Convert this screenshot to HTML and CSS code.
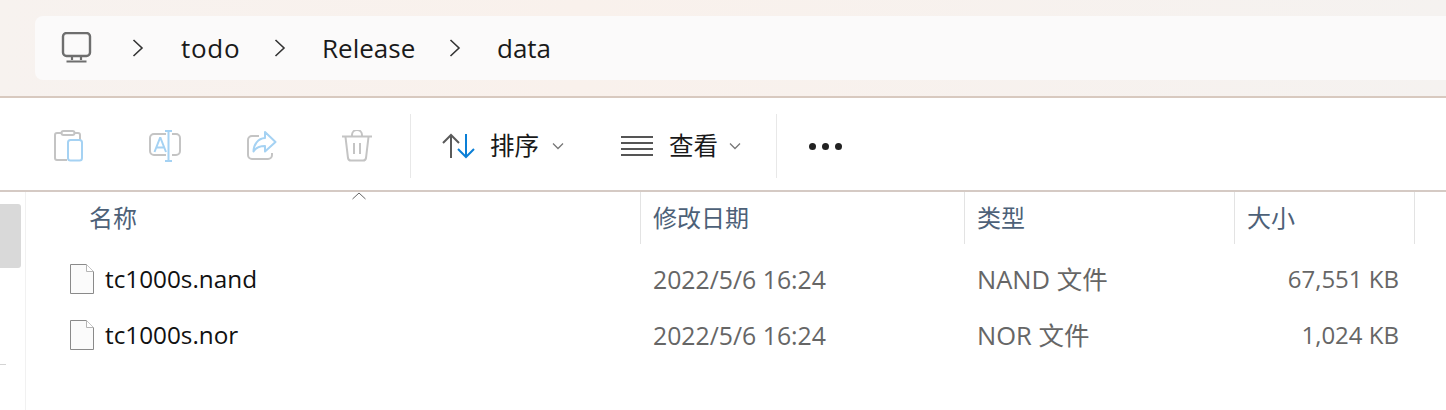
FILE: index.html
```html
<!DOCTYPE html>
<html lang="zh-CN">
<head>
  <meta charset="UTF-8" />
  <title>data</title>
  <link rel="stylesheet" href="styles.css">
</head>
<body>
  <div class="address-area">
    <div class="address-bar">
      <svg class="pc-icon" width="32" height="32" viewBox="0 0 32 32" fill="none">
        <rect x="2" y="1" width="27" height="23" rx="3.5" stroke="#6e6e6e" stroke-width="2.4"/>
        <path d="M11 24v4M20 24v4M5.500 29.500h20" stroke="#6e6e6e" stroke-width="2.200"/>
      </svg>
      <svg class="crumb-arrow" width="12" height="20" viewBox="0 0 12 20" fill="none"><path d="M1.500 2l8.500 8-8.500 8" stroke="#333" stroke-width="1.600"/></svg>
      <span class="crumb crumb-todo">todo</span>
      <svg class="crumb-arrow" width="12" height="20" viewBox="0 0 12 20" fill="none"><path d="M1.500 2l8.500 8-8.500 8" stroke="#333" stroke-width="1.600"/></svg>
      <span class="crumb crumb-release">Release</span>
      <svg class="crumb-arrow" width="12" height="20" viewBox="0 0 12 20" fill="none"><path d="M1.500 2l8.500 8-8.500 8" stroke="#333" stroke-width="1.600"/></svg>
      <span class="crumb">data</span>
    </div>
  </div>

  <div class="toolbar">
    <div class="tool-group">
      <svg width="30" height="32" viewBox="0 0 30 32" fill="none">
        <path d="M13 30H3a2 2 0 0 1-2-2V5a2 2 0 0 1 2-2h4M21 3h3a2 2 0 0 1 2 2v5" stroke="#c4c4c4" stroke-width="2"/>
        <rect x="7.500" y="1" width="13" height="4" rx="2" stroke="#c4c4c4" stroke-width="2"/>
        <rect x="14" y="10" width="14" height="20.500" rx="2.500" stroke="#a5d2f3" stroke-width="2"/>
      </svg>
      <svg width="34" height="32" viewBox="0 0 34 32" fill="none">
        <path d="M18 4H6a4 4 0 0 0-4 4v13a4 4 0 0 0 4 4h12M24 4h4a4 4 0 0 1 4 4v13a4 4 0 0 1-4 4h-4" stroke="#c4c4c4" stroke-width="2"/>
        <path d="M17 1h7M17 31h7M20.500 1v30M6.500 22L12 8h.5L18 22M8.500 17.500h7.500" stroke="#a5d2f3" stroke-width="2"/>
      </svg>
      <svg width="32" height="32" viewBox="0 0 32 32" fill="none">
        <path d="M13 6H6a4 4 0 0 0-4 4v15a4 4 0 0 0 4 4h16a4 4 0 0 0 4-4v-2" stroke="#c4c4c4" stroke-width="2"/>
        <path d="M19 2l10.500 10L19 21.500V16c-5 0-9 1.500-11.500 5.500 0-7 4.500-13 11.500-13.500z" stroke="#a5d2f3" stroke-width="2" stroke-linejoin="round"/>
      </svg>
      <svg width="30" height="32" viewBox="0 0 30 32" fill="none">
        <path d="M0 6.500h30M10 6.500V5a4.500 4.500 0 0 1 10 0v1.500M3.500 7l2.500 21a3 3 0 0 0 3 2.500h12a3 3 0 0 0 3-2.500l2.500-21M12 13v11M18 13v11" stroke="#c4c4c4" stroke-width="2"/>
      </svg>
    </div>
    <div class="tool-divider"></div>
    <div class="tool-btn tool-sort">
      <svg width="36" height="26" viewBox="0 0 36 26" fill="none">
        <path d="M9 25V2M1 10l8-8 8 8" stroke="#5a5a5a" stroke-width="2"/>
        <path d="M24 1v23M16 16l8 8 8-8" stroke="#0b7fd6" stroke-width="2"/>
      </svg>
      <span>排序</span>
      <svg class="caret" width="12" height="8" viewBox="0 0 12 8" fill="none"><path d="M1 1.500l5 5 5-5" stroke="#777" stroke-width="1.300"/></svg>
    </div>
    <div class="tool-btn tool-view">
      <svg width="32" height="22" viewBox="0 0 32 22" fill="none">
        <path d="M0 2h32M0 8h32M0 14h32M0 20h32" stroke="#555" stroke-width="2"/>
      </svg>
      <span>查看</span>
      <svg class="caret" width="12" height="8" viewBox="0 0 12 8" fill="none"><path d="M1 1.500l5 5 5-5" stroke="#777" stroke-width="1.300"/></svg>
    </div>
    <div class="tool-divider divider-last"></div>
    <div class="more-dots"><i></i><i></i><i></i></div>
  </div>

  <div class="content">
    <aside class="side-pane">
      <div class="side-thumb"></div>
      <div class="side-tick"></div>
    </aside>
    <main class="file-list">
      <div class="list-row list-head">
        <div class="col-name">名称
          <svg class="sort-mark" width="14" height="8" viewBox="0 0 14 8" fill="none"><path d="M.5 7l6.500-6 6.500 6" stroke="#666" stroke-width="1"/></svg>
        </div>
        <div class="col-date">修改日期</div>
        <div class="col-type">类型</div>
        <div class="col-size">大小</div>
        <div class="col-end"></div>
      </div>
      <div class="list-row file-row">
        <div class="col-name">
          <svg class="file-icon" width="24" height="30" viewBox="0 0 24 30" fill="none">
            <path d="M.5.500h16l7 7v22H.500z" fill="#fbfbfb" stroke="#8a8a8a"/>
            <path d="M16.500.500v7h7" fill="#fff" stroke="#b5b5b5"/>
          </svg>
          <span class="file-name">tc1000s.nand</span>
        </div>
        <div class="col-date">2022/5/6 16:24</div>
        <div class="col-type">NAND 文件</div>
        <div class="col-size">67,551 KB</div>
      </div>
      <div class="list-row file-row">
        <div class="col-name">
          <svg class="file-icon" width="24" height="30" viewBox="0 0 24 30" fill="none">
            <path d="M.5.500h16l7 7v22H.500z" fill="#fbfbfb" stroke="#8a8a8a"/>
            <path d="M16.500.500v7h7" fill="#fff" stroke="#b5b5b5"/>
          </svg>
          <span class="file-name">tc1000s.nor</span>
        </div>
        <div class="col-date">2022/5/6 16:24</div>
        <div class="col-type">NOR 文件</div>
        <div class="col-size">1,024 KB</div>
      </div>
    </main>
  </div>
</body>
</html>
```

FILE: styles.css
```css
* {
  box-sizing: border-box;
  margin: 0;
  padding: 0;
}

html, body {
  height: 410px;
  overflow: hidden;
}

body {
  font-family: "Open Sans", "Noto Sans CJK SC", sans-serif;
  font-size: 24px;
  background: #fff;
  color: #1a1a1a;
}

svg {
  display: block;
  flex: none;
}

.address-area {
  height: 98px;
  padding: 16px 0 0 35px;
  background: linear-gradient(90deg, #f7f2ef 0%, #f9f1ec 40%, #f5f2f0 100%);
  border-bottom: 2px solid #d8c9bf;
}

.address-bar {
  height: 64px;
  display: flex;
  align-items: center;
  padding-left: 26px;
  background: #fbfafa;
  border-radius: 8px 0 0 8px;
}

.crumb-arrow {
  margin: 0 36px 0 36px;
}

.pc-icon + .crumb-arrow {
  margin-left: 39px;
}

.crumb {
  font-size: 26px;
  line-height: 64px;
}

.crumb-todo {
  width: 57px;
  margin-left: 1px;
  letter-spacing: .7px;
}

.crumb-release {
  width: 91px;
}

.toolbar {
  height: 94px;
  padding-top: 4px;
  display: flex;
  align-items: center;
  border-bottom: 2px solid #d5cac4;
}

.tool-group {
  width: 410px;
  padding-left: 54px;
  display: flex;
  align-items: center;
  gap: 64px;
}

.tool-divider {
  width: 1px;
  height: 64px;
  background: #e8e8e8;
}

.tool-btn {
  display: flex;
  align-items: center;
}

.tool-btn span {
  width: 50px;
  font-size: 24.5px;
  line-height: 32px;
  white-space: nowrap;
}

.caret {
  margin-left: 12px;
}

.tool-sort {
  padding-left: 31px;
}

.tool-sort span {
  margin-left: 12px;
}

.tool-view {
  margin-left: 57px;
}

.tool-view span {
  width: 48px;
  margin-left: 16px;
}

.divider-last {
  margin-left: 35px;
}

.more-dots {
  margin-left: 32px;
  display: flex;
  gap: 6px;
}

.more-dots i {
  width: 7px;
  height: 7px;
  border-radius: 50%;
  background: #222;
}

.content {
  height: 218px;
  display: flex;
}

.side-pane {
  position: relative;
  width: 26px;
  flex: none;
  border-right: 1px solid #f1f1f1;
}

.side-thumb {
  width: 21px;
  height: 64px;
  margin-top: 12px;
  background: #d9d9d9;
  border-radius: 0 3px 3px 0;
}

.side-tick {
  width: 6px;
  height: 1px;
  margin-top: 96px;
  background: #d4d4d4;
}

.file-list {
  flex: 1;
}

.list-row {
  display: grid;
  grid-template-columns: 615px 324px 270px 180px 32px;
}

.list-head {
  height: 51px;
  color: #4d6178;
  font-size: 24px;
  line-height: 52px;
}

.list-head > div {
  position: relative;
  padding-left: 12px;
  border-right: 1px solid #e3e3e3;
}

.list-head .col-name {
  padding-left: 63px;
}

.list-head .col-end {
  border-right: none;
}

.sort-mark {
  position: absolute;
  left: 326px;
  top: 0;
}

.file-row {
  height: 56px;
  align-items: center;
  color: #666;
}

.file-row:nth-child(2) {
  margin-top: 9px;
}

.file-row .col-name {
  display: flex;
  align-items: center;
  gap: 11px;
  padding-left: 44px;
  font-size: 24.3px;
}

.file-icon {
  margin-bottom: 2px;
}

.file-name {
  color: #111;
  line-height: 30px;
  padding-bottom: 2px;
}

.file-row .col-date {
  padding-left: 12px;
  font-size: 24.8px;
  line-height: 30px;
  padding-bottom: 2px;
}

.file-row .col-type {
  padding-left: 12px;
  font-size: 25.5px;
  line-height: 30px;
  padding-bottom: 2px;
}

.file-row .col-size {
  text-align: right;
  padding-right: 16px;
  line-height: 30px;
  padding-bottom: 2px;
}
```
